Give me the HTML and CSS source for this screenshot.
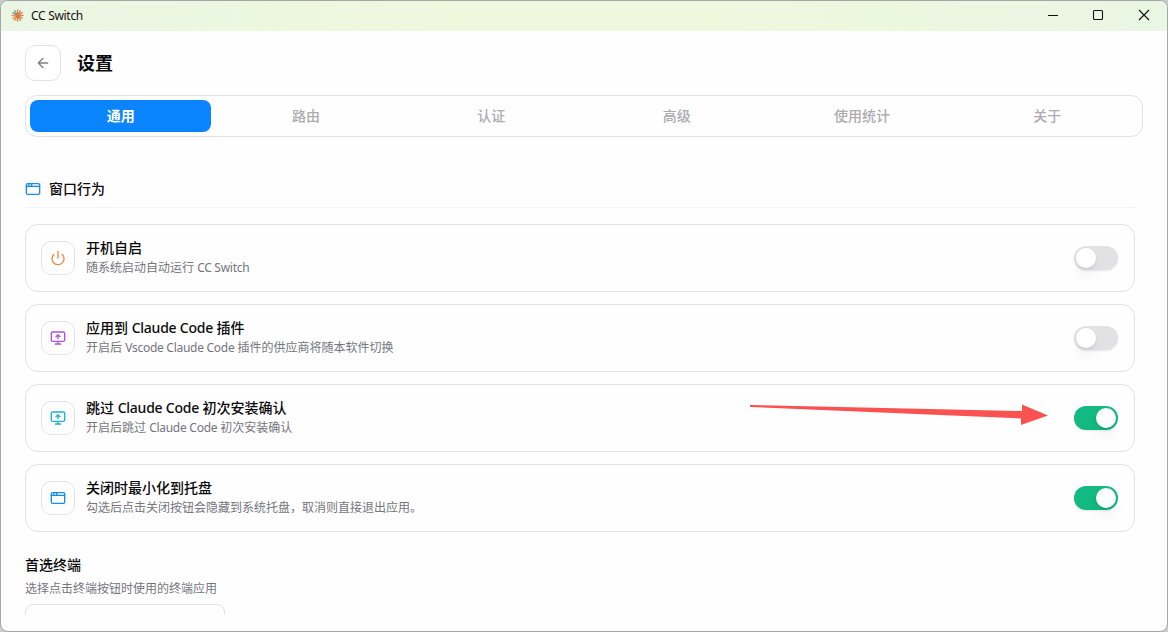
FILE: index.html
```html
<!DOCTYPE html>
<html lang="zh-CN">
<head>
<meta charset="utf-8">
<title>CC Switch</title>
<link rel="stylesheet" href="styles.css">
</head>
<body>
<div class="window">
  <header class="titlebar">
    <svg class="app-logo" viewBox="0 0 14 14" fill="none" stroke-width="1.5" stroke-linecap="round">
      <g stroke="#d9814f"><path d="M7 7V1M7 7l3-5M7 7l5-3M7 7h6M7 7l5 3M7 7l3 5.200M7 7v6M7 7l-3 5"/></g>
      <g stroke="#6b9ea0"><path d="M6 5.500L4 2M5 6L2 4"/></g>
      <g stroke="#e69a50"><path d="M7 7H1M7 7l-5 3"/></g>
      <circle cx="7" cy="7" r="2" fill="#dc7645"/>
    </svg>
    <span class="app-name">CC Switch</span>
    <div class="controls">
      <svg viewBox="0 0 12 12"><path d="M1 6.500h10"/></svg>
      <svg viewBox="0 0 12 12"><rect x="1.500" y="1.500" width="9" height="9" rx="1"/></svg>
      <svg class="close" viewBox="0 0 12 12"><path d="M1 1l10 10M11 1L1 11"/></svg>
    </div>
  </header>

  <main class="content">
    <div class="page-head">
      <button class="back"><svg class="icon" viewBox="0 0 24 24"><path d="m12 19-7-7 7-7M19 12H5"/></svg></button>
      <h1>设置</h1>
    </div>
    <nav class="tabs">
      <span class="tab active">通用</span><span class="tab">路由</span><span class="tab">认证</span><span class="tab">高级</span><span class="tab">使用统计</span><span class="tab">关于</span>
    </nav>

    <div class="scroll">
      <div class="section-head">
        <svg class="icon blue" viewBox="0 0 24 24"><rect x="2" y="4" width="20" height="16" rx="2"/><path d="M10 4v4M2 8h20M6 4v4"/></svg>
        <h2>窗口行为</h2>
      </div>
      <div class="cards">
        <div class="card">
          <div class="tile"><svg class="icon orange" viewBox="0 0 24 24"><path d="M12 2v10M18.400 6.600a9 9 0 1 1-12.770.040"/></svg></div>
          <div class="copy"><p class="name">开机自启</p><p class="desc">随系统启动自动运行 <span class="latin">CC Switch</span></p></div>
          <div class="switch"><i></i></div>
        </div>
        <div class="card">
          <div class="tile"><svg class="icon purple" viewBox="0 0 24 24"><path d="m9 10 3-3 3 3M12 13V7M12 17v4M8 21h8"/><rect x="2" y="3" width="20" height="14" rx="2"/></svg></div>
          <div class="copy"><p class="name">应用到 <span class="latin">Claude Code</span> 插件</p><p class="desc">开启后 <span class="latin">Vscode Claude Code</span> 插件的供应商将随本软件切换</p></div>
          <div class="switch"><i></i></div>
        </div>
        <div class="card">
          <div class="tile"><svg class="icon cyan" viewBox="0 0 24 24"><path d="m9 10 3-3 3 3M12 13V7M12 17v4M8 21h8"/><rect x="2" y="3" width="20" height="14" rx="2"/></svg></div>
          <div class="copy"><p class="name">跳过 <span class="latin">Claude Code</span> 初次安装确认</p><p class="desc">开启后跳过 <span class="latin">Claude Code</span> 初次安装确认</p></div>
          <div class="switch on"><i></i></div>
        </div>
        <div class="card">
          <div class="tile"><svg class="icon blue" viewBox="0 0 24 24"><rect x="2" y="4" width="20" height="16" rx="2"/><path d="M10 4v4M2 8h20M6 4v4"/></svg></div>
          <div class="copy"><p class="name">关闭时最小化到托盘</p><p class="desc">勾选后点击关闭按钮会隐藏到系统托盘，取消则直接退出应用。</p></div>
          <div class="switch on"><i></i></div>
        </div>
      </div>
      <div class="terminal">
        <h2>首选终端</h2>
        <p class="desc">选择点击终端按钮时使用的终端应用</p>
        <div class="select"></div>
      </div>
    </div>
  </main>
  <svg class="arrow" viewBox="0 0 298 22"><path d="M0 1L272 7V0.500L298 11.500L271 21V14.500L0 3Z"/></svg>
</div>
</body>
</html>
```
FILE: styles.css
```css
* { box-sizing: border-box; }
body {
  margin: 0;
  background: #c9cbcc;
  font-family: "Noto Sans", "Noto Sans CJK SC", sans-serif;
  color: #0a0a0c;
}
h1, h2, p { margin: 0; }
.window {
  position: relative;
  width: 1168px;
  height: 632px;
  border: 1px solid #a3a5a6;
  border-radius: 8px;
  background: #fefefe;
  overflow: hidden;
  display: flex;
  flex-direction: column;
}
.titlebar {
  flex: none;
  height: 30px;
  display: flex;
  align-items: center;
  padding: 0 0 2px 10px;
  background: linear-gradient(90deg, #eaf6e4, #eff8dd 40%, #eff8dd 60%, #e9f6e4);
}
.app-logo { width: 13px; height: 13px; }
.app-name { margin-left: 7px; font-size: 12px; letter-spacing: -0.3px; color: #111; }
.controls { margin-left: auto; display: flex; gap: 33px; padding-right: 17px; }
.controls svg { width: 12px; height: 12px; fill: none; stroke: #111; stroke-width: 1.1; }
.controls .close { margin-left: 1px; }
.content { flex: 1; min-height: 0; padding: 14px 24px 16px; display: flex; flex-direction: column; }
.page-head { display: flex; align-items: center; gap: 16px; }
.back {
  width: 36px;
  height: 36px;
  padding: 0;
  border: 1px solid #e2e2e5;
  border-radius: 10px;
  background: #fff;
  color: #808085;
  display: grid;
  place-items: center;
}
.icon {
  width: 16px;
  height: 16px;
  fill: none;
  stroke: currentColor;
  stroke-width: 2;
  stroke-linecap: round;
  stroke-linejoin: round;
}
h1 { font-size: 18px; line-height: 28px; font-weight: 700; }
.tabs {
  flex: none;
  margin-top: 14px;
  height: 42px;
  padding: 4px;
  border: 1px solid #e2e2e5;
  border-radius: 12px;
  display: grid;
  grid-template-columns: repeat(6, 1fr);
  gap: 4px;
}
.tab {
  display: flex;
  align-items: center;
  justify-content: center;
  padding-bottom: 2px;
  border-radius: 8px;
  font-size: 14px;
  font-weight: 500;
  color: #acacaf;
}
.tab.active { background: #0a84ff; color: #fff; font-weight: 700; }
.scroll { flex: 1; min-height: 0; overflow: hidden; padding: 42px 8px 0 0; }
.section-head {
  display: flex;
  align-items: center;
  gap: 8px;
  height: 29px;
  padding-bottom: 8px;
  border-bottom: 1px solid #f4f4f6;
}
h2 { font-size: 14px; line-height: 20px; font-weight: 500; }
.cards { margin-top: 16px; display: flex; flex-direction: column; gap: 12px; }
.card {
  height: 68px;
  padding: 0 16px 0 15px;
  border: 1px solid #e2e2e5;
  border-radius: 13px;
  display: flex;
  align-items: center;
}
.tile {
  width: 34px;
  height: 34px;
  border: 1px solid #e4e4e7;
  border-radius: 10px;
  display: grid;
  place-items: center;
}
.copy { margin-left: 11px; display: grid; gap: 1px; padding-bottom: 1px; }
.name { font-size: 14px; line-height: 20px; font-weight: 500; }
.name .latin { letter-spacing: -0.24px; }
.desc { font-size: 12px; line-height: 18px; color: #75757b; }
.desc .latin { letter-spacing: -0.27px; }
.blue { color: #168cf0; }
.orange { color: #ee8848; }
.purple { color: #a855dc; }
.cyan { color: #1eb3c8; }
.switch {
  margin-left: auto;
  width: 44px;
  height: 24px;
  padding: 2px;
  border-radius: 12px;
  background: #e2e2e5;
  box-shadow: 0 1px 2px rgba(0,0,0,.09);
  display: flex;
}
.switch i {
  width: 20px;
  height: 20px;
  border-radius: 50%;
  background: #fff;
  box-shadow: 0 10px 15px -3px rgba(0,0,0,.08), 0 2px 4px -1px rgba(0,0,0,.1);
}
.switch.on { background: #12b981; justify-content: flex-end; }
.terminal { margin-top: 23px; }
.terminal .desc { margin-top: 5px; }
.select {
  width: 200px;
  height: 36px;
  margin-top: 6px;
  border: 1px solid #e2e2e5;
  border-radius: 8px;
}
.arrow { position: absolute; left: 749px; top: 403px; width: 298px; height: 22px; fill: #fa5151; }
```
